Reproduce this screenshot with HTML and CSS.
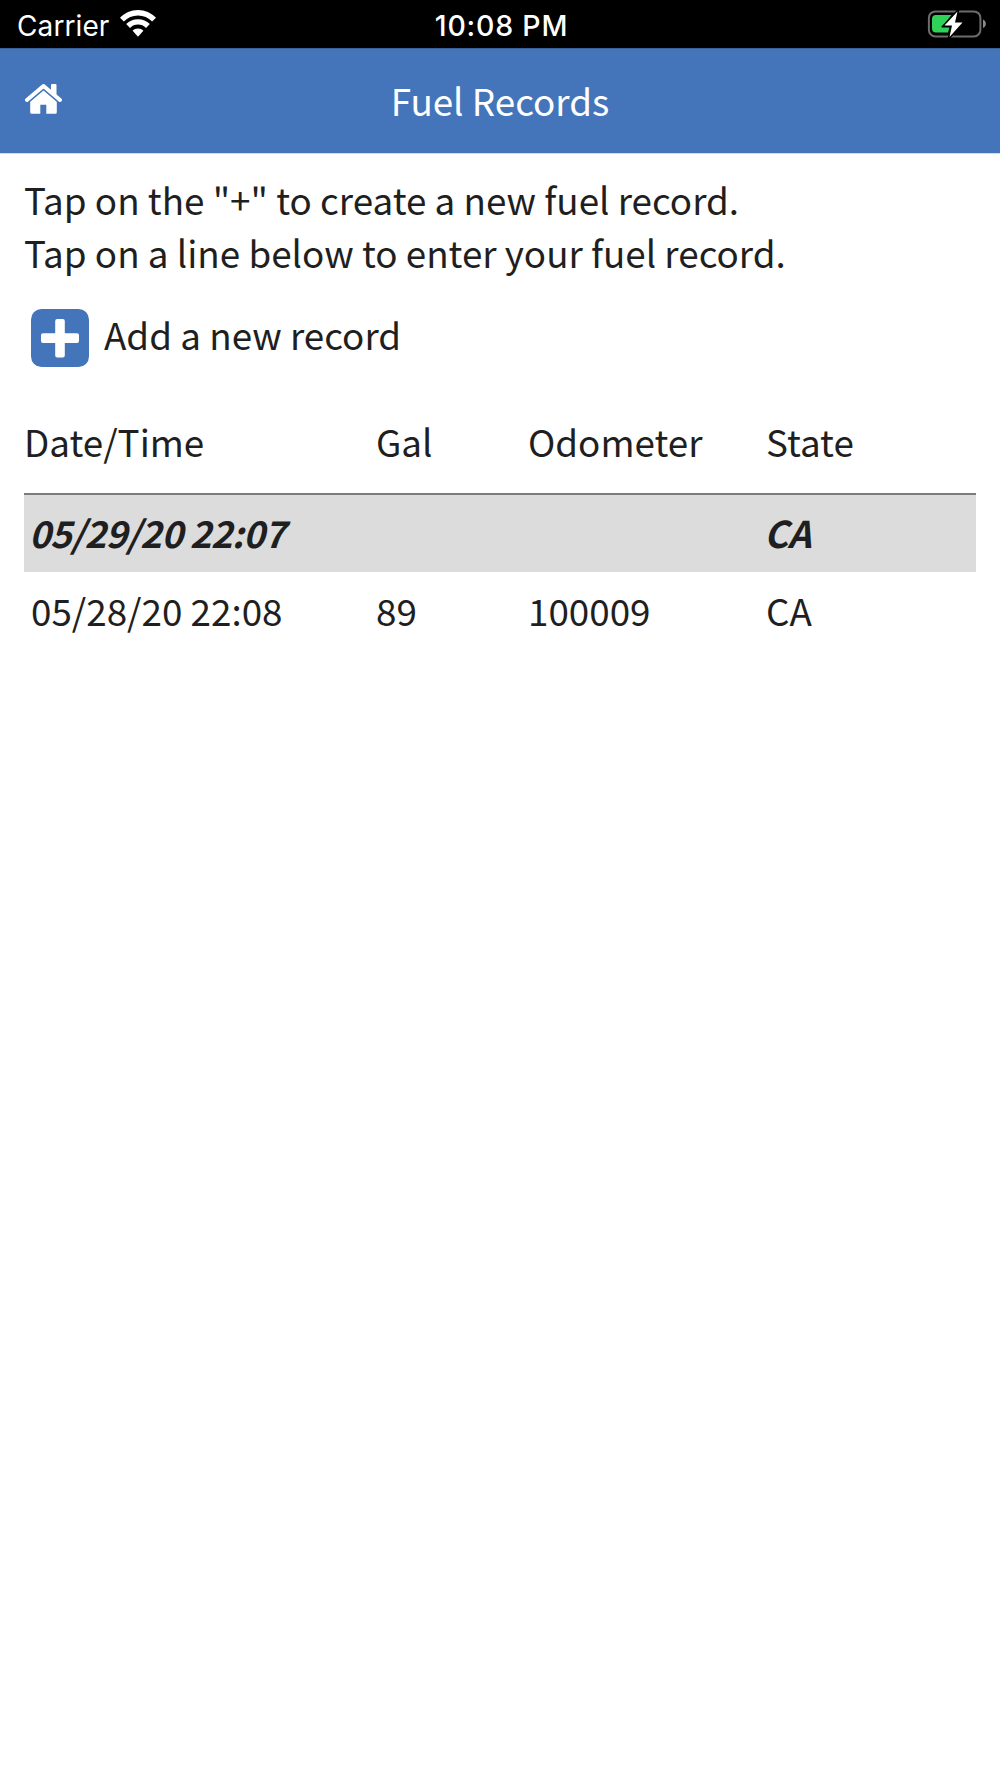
FILE: index.html
```html
<!DOCTYPE html>
<html lang="en">
<head>
<meta charset="utf-8">
<title>Fuel Records</title>
<link rel="stylesheet" href="styles.css">
</head>
<body>
<div class="status">
  <div class="carrier"><span>Carrier</span>
    <svg class="wifi" width="36" height="27" viewBox="0 0 36 27" fill="#fff"><path d="M18 0C11 0 4.700 2.900 0 7.700L3.900 11.600C7.600 7.800 12.500 5.600 18 5.600S28.400 7.800 32.100 11.600L36 7.700C31.300 2.900 25 0 18 0Z"/><path d="M18 9.300C13.400 9.300 9.300 11.100 6.200 14.100L10 17.900C12.100 15.800 14.900 14.600 18 14.600S23.900 15.800 26 17.900L29.800 14.100C26.700 11.100 22.600 9.300 18 9.300Z"/><path d="M18 18.600C15.900 18.600 14 19.400 12.600 20.700L18 26.800L23.400 20.700C22 19.400 20.100 18.600 18 18.600Z"/></svg>
  </div>
  <div class="clock">10:08 PM</div>
  <svg class="battery" width="60" height="28" viewBox="0 0 60 28"><rect x="1.900" y="1.400" width="51.500" height="25" rx="6.500" fill="none" stroke="#6d6d6d" stroke-width="2"/><path d="M56 9.500C59.800 11 59.800 16.500 56 18Z" fill="#8a8a8a"/><path d="M9 5H24.500L14.500 17.500H22.500L21 22.500H9A4 4 0 0 1 5 18.500V9A4 4 0 0 1 9 5Z" fill="#30d158"/><path d="M30.500 1.500L17.500 15.500H25L22.500 27L35.500 12.500H28Z" fill="#fff" stroke="#000" stroke-width="3" paint-order="stroke"/></svg>
</div>
<header class="bar">
  <svg class="home" width="37" height="30" viewBox="0 0 37 30" fill="#fff"><path d="M2 16L18.500 2L35 16" fill="none" stroke="#fff" stroke-width="4" stroke-linecap="round" stroke-linejoin="round"/><path d="M26 1Q26 0 27 0H30.500Q31.500 0 31.500 1V12L26 7.500Z"/><path d="M18.500 6.200L5.200 17.500V28.200Q5.200 29.800 6.800 29.800H15.300V20.800H21.300V29.800H30.200Q31.800 29.800 31.800 28.200V17.500Z"/><path d="M4.500 17.600L18.500 5.700L32.500 17.600" fill="none" stroke="#4475ba" stroke-width="1.100"/></svg>
  <h1 class="title">Fuel Records</h1>
</header>
<main class="content">
  <p class="intro">Tap on the "+" to create a new fuel record.<br>Tap on a line below to enter your fuel record.</p>
  <div class="add">
    <svg width="58" height="58" viewBox="0 0 58 58"><rect width="58" height="58" rx="10.500" fill="#4475ba"/><path d="M26.200 10H31.800Q33.800 10 33.800 12V24.300H46Q48 24.300 48 26.300V31.900Q48 33.900 46 33.900H33.800V46.500Q33.800 48.500 31.800 48.500H26.200Q24.200 48.500 24.200 46.500V33.900H12Q10 33.900 10 31.900V26.300Q10 24.300 12 24.300H24.200V12Q24.200 10 26.200 10Z" fill="#fff"/></svg>
    <span>Add a new record</span>
  </div>
  <div class="row head"><span>Date/Time</span><span>Gal</span><span>Odometer</span><span>State</span></div>
  <div class="row current"><span>05/29/20 22:07</span><span></span><span></span><span>CA</span></div>
  <div class="row"><span>05/28/20 22:08</span><span>89</span><span>100009</span><span>CA</span></div>
</main>
</body>
</html>
```
FILE: styles.css
```css
* { box-sizing: border-box; }
body { margin: 0; background: #fff; color: #1f1f21; font: 36.800px/53.300px "Noto Sans CJK SC", sans-serif; }
svg { display: block; flex: none; }
.status { height: 48px; padding: 0 13px 0 17px; background: #000; color: #fff; display: grid; grid-template-columns: 1fr auto 1fr; align-items: center; font: 28px/44px Inter, sans-serif; }
.carrier { display: flex; align-items: center; gap: 11px; letter-spacing: 0.100px; }
.carrier span, .clock { padding-top: 4px; }
.wifi { margin-top: -1px; }
.clock { margin-right: 1px; font-weight: 500; font-size: 28.500px; letter-spacing: 0.800px; }
.battery { justify-self: end; }
.bar { height: 106px; padding: 0 25px; background: #4475ba; color: #fff; border-top: 1px solid #38609a; border-bottom: 1px solid #d9dade; display: grid; grid-template-columns: 1fr auto 1fr; align-items: center; }
.home { margin-bottom: 5px; }
.title { margin: 0; font-size: 36.800px; font-weight: 400; }
.content { padding: 19px 24px; }
.intro { margin: 0; }
.add { margin-top: 29px; padding-left: 7px; height: 58px; display: flex; align-items: center; gap: 15px; }
.add span { padding-bottom: 5px; }
.row { display: grid; grid-template-columns: 345px 152px 238px 1fr; height: 78px; align-items: center; padding: 0 0 0 7px; }
.head { grid-template-columns: 352px 152px 238px 1fr; margin-top: 36px; height: 92px; border-bottom: 2px solid #7b7b7d; padding: 0 0 11px; }
.current { height: 77px; padding: 0 0 0 5px; background: #dcdcdc; font-weight: 700; font-style: italic; letter-spacing: -0.700px; }
```
